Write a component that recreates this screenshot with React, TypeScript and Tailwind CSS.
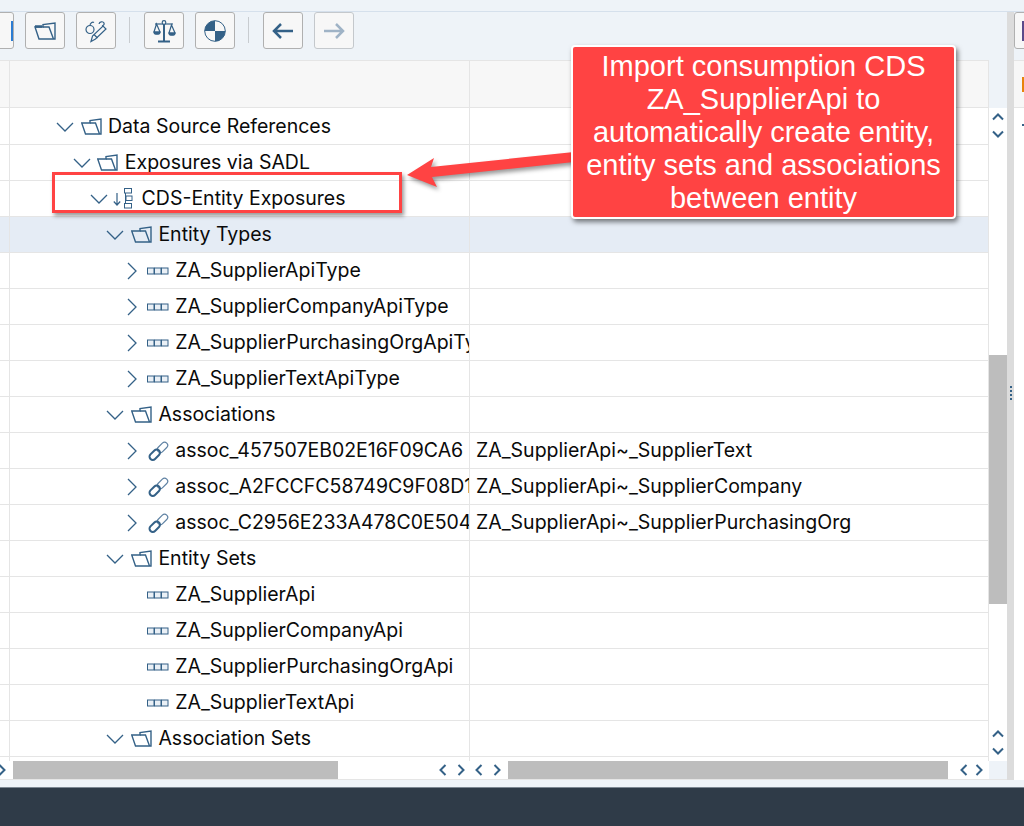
import type { ReactNode } from 'react';

const BLUE = '#346187';

type Row = {
  depth: number;
  open?: boolean;
  leaf?: boolean;
  icon: 'folder' | 'entity' | 'tree' | 'link';
  name: string;
  value?: string;
  selected?: boolean;
};

const rows: Row[] = [
  { depth: 0, open: true, icon: 'folder', name: 'Data Source References' },
  { depth: 1, open: true, icon: 'folder', name: 'Exposures via SADL' },
  { depth: 2, open: true, icon: 'tree', name: 'CDS-Entity Exposures' },
  { depth: 3, open: true, icon: 'folder', name: 'Entity Types', selected: true },
  { depth: 4, icon: 'entity', name: 'ZA_SupplierApiType' },
  { depth: 4, icon: 'entity', name: 'ZA_SupplierCompanyApiType' },
  { depth: 4, icon: 'entity', name: 'ZA_SupplierPurchasingOrgApiType' },
  { depth: 4, icon: 'entity', name: 'ZA_SupplierTextApiType' },
  { depth: 3, open: true, icon: 'folder', name: 'Associations' },
  { depth: 4, icon: 'link', name: 'assoc_457507EB02E16F09CA6', value: 'ZA_SupplierApi~_SupplierText' },
  { depth: 4, icon: 'link', name: 'assoc_A2FCCFC58749C9F08D1', value: 'ZA_SupplierApi~_SupplierCompany' },
  { depth: 4, icon: 'link', name: 'assoc_C2956E233A478C0E504', value: 'ZA_SupplierApi~_SupplierPurchasingOrg' },
  { depth: 3, open: true, icon: 'folder', name: 'Entity Sets' },
  { depth: 4, leaf: true, icon: 'entity', name: 'ZA_SupplierApi' },
  { depth: 4, leaf: true, icon: 'entity', name: 'ZA_SupplierCompanyApi' },
  { depth: 4, leaf: true, icon: 'entity', name: 'ZA_SupplierPurchasingOrgApi' },
  { depth: 4, leaf: true, icon: 'entity', name: 'ZA_SupplierTextApi' },
  { depth: 3, open: true, icon: 'folder', name: 'Association Sets' },
];

function Chevron({ dir }: { dir: 'down' | 'right' }) {
  return (
    <svg width="18" height="18" viewBox="0 0 18 18" fill="none" stroke={BLUE} strokeWidth="1.3" className="shrink-0">
      <path d={dir === 'down' ? 'M1 5l8 8 8-8' : 'M5 1l8 8-8 8'} />
    </svg>
  );
}

// scrollbar arrows are smaller and heavier than the tree toggles
function ScrollArrow({ dir }: { dir: 'up' | 'down' | 'left' | 'right' }) {
  const d = {
    up: 'M2 9.500l5-5 5 5',
    down: 'M2 4.500l5 5 5-5',
    left: 'M9.500 2l-5 5 5 5',
    right: 'M4.500 2l5 5-5 5',
  }[dir];
  return (
    <svg width="14" height="14" viewBox="0 0 14 14" fill="none" stroke={BLUE} strokeWidth="2" className="shrink-0">
      <path d={d} />
    </svg>
  );
}

function FolderIcon() {
  return (
    <svg width="21" height="17" viewBox="0 0 21 17" fill="none" stroke={BLUE} strokeWidth="1.400" className="shrink-0">
      <path d="M.7 5H9V2.500L20 1V16H4.500Z" />
      <path d="M9 5H14.500L18.500 16" />
    </svg>
  );
}

function EntityIcon() {
  return (
    <svg width="22" height="8" viewBox="0 0 22 8" fill="#eaf0f6" stroke={BLUE} strokeWidth="1" className="shrink-0">
      <rect x="0.500" y="1" width="6.500" height="6" />
      <rect x="7.500" y="1" width="6.500" height="6" />
      <rect x="14.500" y="1" width="6.500" height="6" />
    </svg>
  );
}

function TreeIcon() {
  return (
    <svg width="20" height="21" viewBox="0 0 20 21" fill="none" stroke={BLUE} strokeWidth="1" className="-ml-[4px] shrink-0">
      <path d="M4 5v12M.8 13.500L4 17l3.200-3.500" strokeWidth="1.200" />
      <rect x="11.500" y="0.500" width="7" height="4.500" />
      <rect x="13" y="8" width="6" height="4.500" />
      <rect x="11.500" y="15.500" width="7" height="4.500" />
      <path d="M12.500 5v10.500M12.500 10h.5" />
    </svg>
  );
}

function LinkIcon() {
  return (
    <svg width="21" height="20" viewBox="0 0 21 20" fill="none" className="shrink-0">
      <rect x="8.500" y="3.300" width="12" height="6.200" rx="3.100" transform="rotate(-45 14.500 6.400)" stroke="#5f82a3" strokeWidth="1.200" />
      <rect x="0.700" y="10.500" width="12" height="6.500" rx="3.200" transform="rotate(-45 6.700 13.700)" stroke={BLUE} strokeWidth="2" />
    </svg>
  );
}

const icons = {
  folder: <FolderIcon />,
  entity: <EntityIcon />,
  tree: <TreeIcon />,
  link: <LinkIcon />,
};

function TreeRow({ row }: { row: Row }) {
  return (
    <div className={`flex h-9 border-b border-[#e5e5e5] ${row.selected ? 'bg-[#e5ecf5]' : 'bg-white'}`}>
      <div className="w-[10px] shrink-0 border-r border-[#e5e5e5]" />
      <div
        className="flex w-[460px] shrink-0 items-center overflow-hidden border-r border-[#e5e5e5] whitespace-nowrap"
        style={{ paddingLeft: 46 + row.depth * 16.8 }}
      >
        <div className="flex w-[18px] shrink-0 justify-center">
          {!row.leaf && <Chevron dir={row.open ? 'down' : 'right'} />}
        </div>
        <div className="flex w-[30px] shrink-0 justify-center pl-[4px]">{icons[row.icon]}</div>
        <span className="ml-[4px] pt-px">{row.name}</span>
      </div>
      <div className="flex min-w-0 flex-1 items-center border-r border-[#e5e5e5] pl-[6px] pt-px whitespace-nowrap">{row.value}</div>
    </div>
  );
}

function ToolButton({ children, disabled }: { children: ReactNode; disabled?: boolean }) {
  return (
    <div
      className={`flex h-[37px] w-10 shrink-0 items-center justify-center rounded-[3px] border bg-[#f7f7f7] ${
        disabled ? 'border-[#c4c8cc]' : 'border-[#b0b0b0]'
      }`}
    >
      {children}
    </div>
  );
}

function ToolSeparator() {
  return <div className="mt-[5px] mr-[3px] ml-[2px] h-[26px] w-px shrink-0 bg-[#c8ccd0]" />;
}

function VScroll() {
  return (
    <div className="flex w-[18px] shrink-0 flex-col bg-white">
      <div className="flex h-[35px] flex-col items-center justify-center">
        <ScrollArrow dir="up" />
        <div className="h-[3px]" />
        <ScrollArrow dir="down" />
      </div>
      <div className="h-[212px]" />
      <div className="h-[249px] bg-[#bdbdbd]" />
      <div className="flex-1" />
      <div className="flex h-[40px] flex-col items-center pt-[6px]">
        <ScrollArrow dir="up" />
        <div className="h-[3px]" />
        <ScrollArrow dir="down" />
      </div>
    </div>
  );
}

function HScrollArrows({ narrow }: { narrow?: boolean }) {
  return (
    <div className={`flex shrink-0 items-center ${narrow ? 'gap-[1px]' : 'gap-[4px]'}`}>
      <ScrollArrow dir="left" />
      <ScrollArrow dir="right" />
    </div>
  );
}

function HeaderCells() {
  return (
    <>
      <div className="w-[10px] border-r border-[#e5e5e5]" />
      <div className="w-[460px] border-r border-[#e5e5e5]" />
      <div className="flex-1 border-r border-[#e5e5e5]" />
    </>
  );
}

export default function App() {
  return (
    <div className="relative flex h-[826px] w-[1024px] flex-col overflow-hidden bg-[#eef3f8] font-['Inter',sans-serif] text-[19.5px] text-[#0a0a0a]">
      <div className="flex min-h-0 flex-1 flex-col pt-[11px]">
        <div className="flex min-h-0 flex-1 border-t border-[#d5e0ec]">
          {/* main panel */}
          <div className="flex w-[1007px] shrink-0 flex-col">
            <div className="ml-[-26px] flex h-[48px] shrink-0 gap-[11px]">
              <ToolButton>
                <div className="ml-[36px] h-5 w-1 bg-[#2b7cd3]" />
              </ToolButton>
              <ToolButton>
                <svg width="24" height="20" viewBox="0 0 24 20" fill="none" stroke={BLUE} strokeWidth="1.400">
                  <path d="M2 6H10V3.500L22 2V18H6Z" />
                  <path d="M10 6H16L20.500 18" />
                  <path d="M2 5.500H9" strokeWidth="2.500" />
                </svg>
              </ToolButton>
              <ToolButton>
                <svg width="24" height="24" viewBox="0 0 24 24" fill="none" stroke={BLUE} strokeWidth="1.200">
                  <circle cx="6" cy="10.500" r="4" />
                  <path d="M6 6.500C6 4 8.500 2.500 10 3.500" />
                  <path d="M15 5c.500-2.500 4-3 5-1 .500 1.500-.500 2.500-2 3" />
                  <path d="M7 22.500l1.500-5.500L19 7l3 3-10.500 10z" />
                  <path d="M10 15.500l3.500 3.500" />
                </svg>
              </ToolButton>
              <ToolSeparator />
              <ToolButton>
                <svg width="24" height="24" viewBox="0 0 24 24" fill="none" stroke={BLUE} strokeWidth="1.200">
                  <path d="M12 4v18" strokeWidth="2" />
                  <path d="M6 22.500h12" strokeWidth="2" />
                  <path d="M3 5h18" />
                  <circle cx="12" cy="3.500" r="1.800" fill="#f7f7f7" />
                  <path d="M4.500 5L2 13h6z" />
                  <path d="M19.500 6L17 14h6z" />
                  <path d="M2 13c0 3 6 3 6 0zM17 14c0 3 6 3 6 0z" fill={BLUE} />
                </svg>
              </ToolButton>
              <ToolButton>
                <svg width="22" height="22" viewBox="0 0 22 22">
                  <circle cx="11" cy="11" r="10.300" fill="#f7f7f7" stroke={BLUE} strokeWidth="1" />
                  <path d="M11 .700A10.300 10.300 0 0 0 .700 11H11zM11 21.300A10.300 10.300 0 0 0 21.300 11H11z" fill={BLUE} />
                </svg>
              </ToolButton>
              <ToolSeparator />
              <ToolButton>
                <svg width="24" height="20" viewBox="0 0 24 20" fill="none" stroke={BLUE} strokeWidth="2.500">
                  <path d="M3 10h19M10 3l-7 7 7 7" />
                </svg>
              </ToolButton>
              <ToolButton disabled>
                <svg width="24" height="20" viewBox="0 0 24 20" fill="none" stroke="#9fb3c6" strokeWidth="2.500">
                  <path d="M2 10h19M14 3l7 7-7 7" />
                </svg>
              </ToolButton>
            </div>

            {/* header */}
            <div className="flex h-[48px] shrink-0">
              <div className="flex flex-1 border-y border-[#e5e5e5] bg-[#f7f7f7]">
                <HeaderCells />
              </div>
              <div className="w-[18px] shrink-0" />
            </div>

            {/* tree */}
            <div className="flex h-[653px] shrink-0 bg-white">
              <div className="min-w-0 flex-1 overflow-hidden">
                <div className="flex h-px">
                  <HeaderCells />
                </div>
                {rows.map((row) => (
                  <TreeRow key={row.name} row={row} />
                ))}
                <div className="flex h-[4px]">
                  <HeaderCells />
                </div>
              </div>
              <VScroll />
            </div>

            {/* horizontal scrollbars */}
            <div className="flex h-[19px] shrink-0 border-b border-[#e5e5e5] bg-white">
              <div className="flex w-[13px] shrink-0 items-center justify-start overflow-hidden">
                <div className="ml-[-5px]">
                  <ScrollArrow dir="right" />
                </div>
              </div>
              <div className="flex w-[457px] shrink-0 items-center pr-[2px]">
                <div className="h-full w-[325px] bg-[#bdbdbd]" />
                <div className="flex-1" />
                <HScrollArrows />
              </div>
              <div className="flex w-[519px] shrink-0 items-center pr-[3px] pl-[2px]">
                <HScrollArrows />
                <div className="ml-[4px] h-full w-[440px] bg-[#bdbdbd]" />
                <div className="flex-1" />
                <HScrollArrows narrow />
              </div>
              <div className="flex-1 bg-[#eef3f8]" />
            </div>
          </div>

          {/* sash */}
          <div className="relative w-[7px] shrink-0 bg-[#dcdcdc]">
            <div className="absolute left-[3px] top-[374px] flex flex-col gap-[2px]">
              {[0, 1, 2, 3].map((i) => (
                <div key={i} className="h-[2px] w-[2px] bg-[#346187]" />
              ))}
            </div>
          </div>

          {/* right panel */}
          <div className="min-w-0 flex-1 overflow-hidden bg-white">
            <div className="flex h-[48px] bg-[#eef3f8]">
              <div className="h-[37px] w-10 shrink-0 rounded-[3px] border border-[#b0b0b0] bg-[#f7f7f7] pl-[7px] pt-[8px]">
                <div className="h-5 w-2 bg-[#5a4a8a]" />
              </div>
            </div>
            <div className="h-[48px] border-y border-[#e5e5e5] bg-[#f7f7f7] pl-[8px] pt-[16px]">
              <div className="h-[15px] w-[2px] bg-[#e8830c]" />
            </div>
            <div className="pl-[8px] pt-[16px]">
              <div className="h-[2px] w-[3px] bg-[#346187]" />
            </div>
          </div>
        </div>
        <div className="h-[7px] shrink-0" />
      </div>

      <div className="h-[39px] shrink-0 border-t border-[#7c8792] bg-[#2f3b48]" />

      {/* annotations over the screenshot */}
      <div className="absolute left-[52px] top-[172px] h-[41px] w-[350px] border-[3px] border-[#ff4343] shadow-[2px_3px_4px_rgba(0,0,0,0.4)]" />
      <svg className="absolute left-[400px] top-[145px]" width="180" height="50" viewBox="400 145 180 50" style={{ filter: 'drop-shadow(2px 3px 2px rgba(0,0,0,0.4))' }}>
        <path d="M407 175L434 158L431 167L574 152V162L432 177L437 187Z" fill="#ff4343" />
      </svg>
      <div className="absolute left-[571px] top-[45px] flex h-[174px] w-[385px] flex-col items-center justify-center rounded-[4px] border-2 border-white bg-[#ff4343] text-center font-['Liberation_Sans',sans-serif] text-[29px] leading-[33px] text-white shadow-[2px_3px_5px_rgba(0,0,0,0.5)]">
        <div>Import consumption CDS</div>
        <div>ZA_SupplierApi to</div>
        <div>automatically create entity,</div>
        <div>entity sets and associations</div>
        <div>between entity</div>
      </div>
    </div>
  );
}
